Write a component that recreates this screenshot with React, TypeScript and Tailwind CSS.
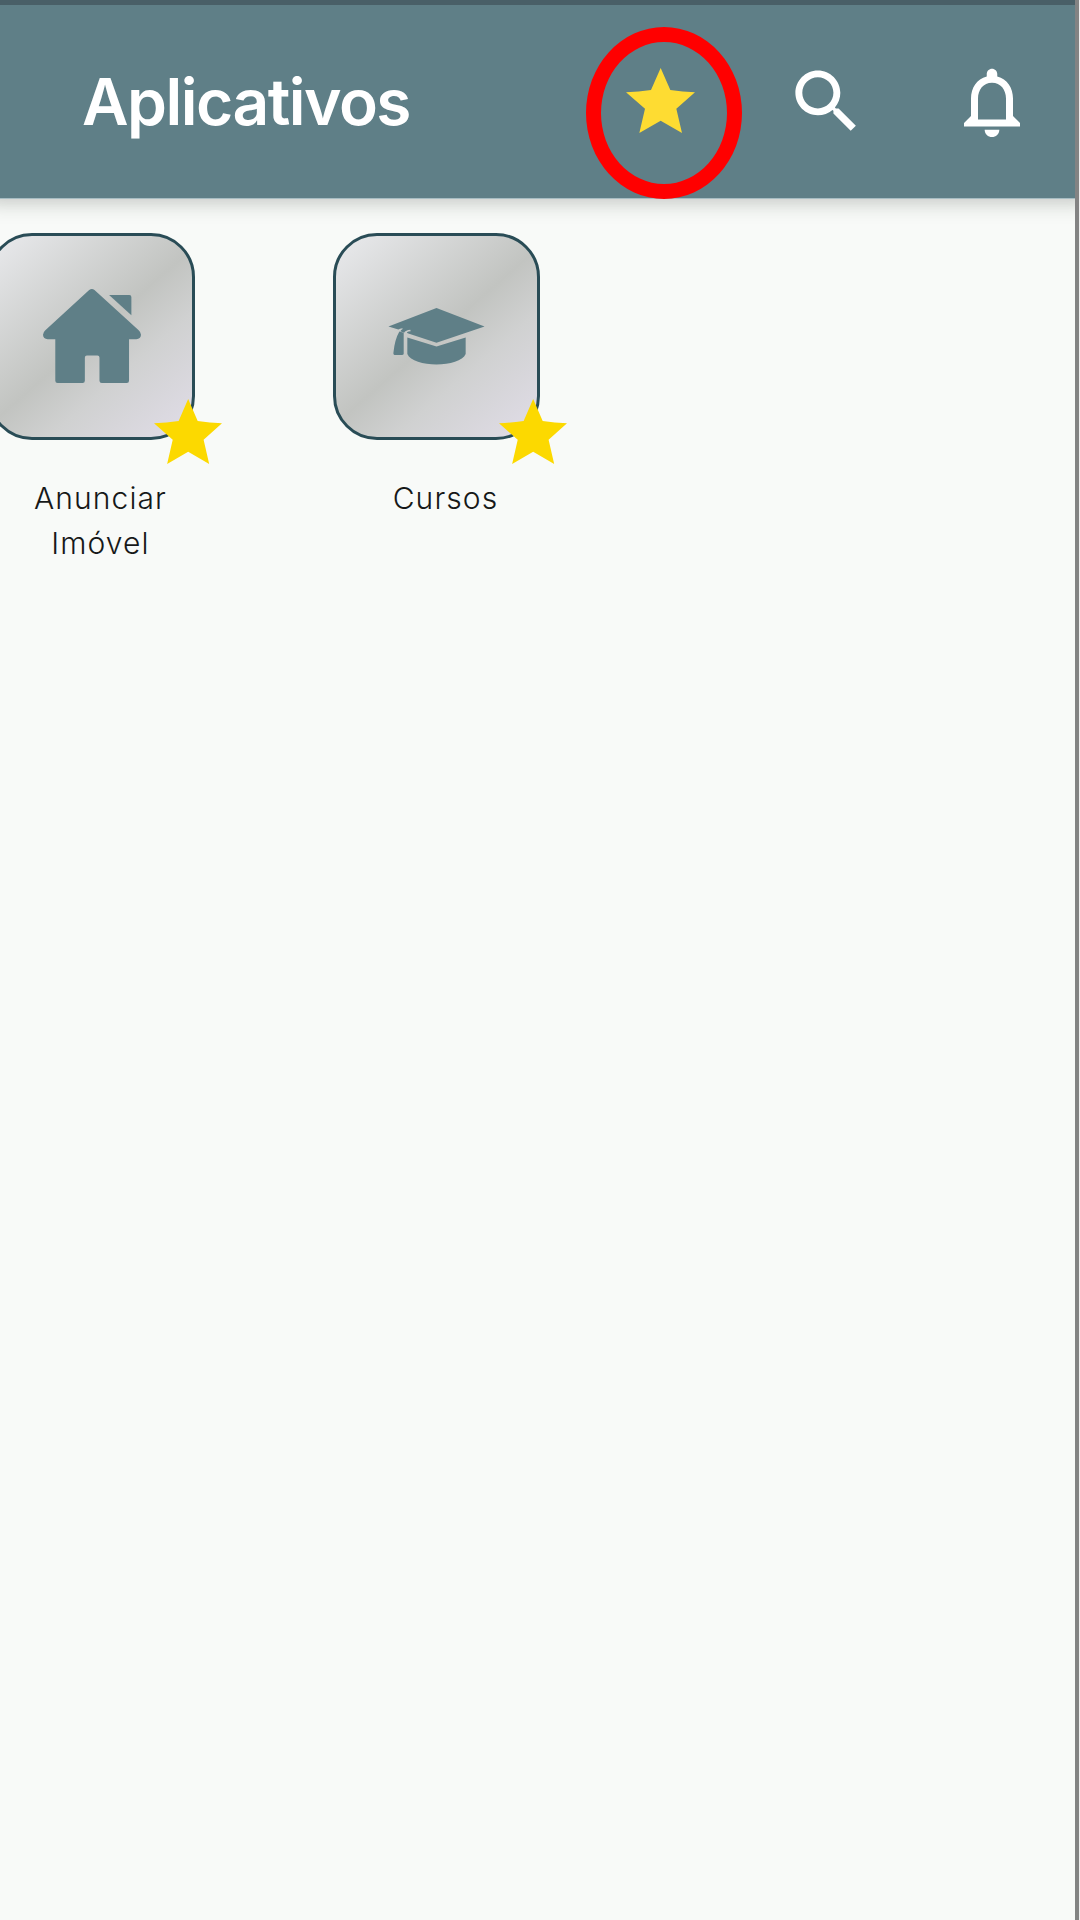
import type { ReactNode } from "react";

function Star({ className }: { className: string }) {
  return (
    <svg viewBox="0 0 207 195" preserveAspectRatio="none" className={className} fill="currentColor" aria-hidden="true">
      <path d="M104 0 133 66Q170 71 207 73L151 122 168 195 104 158 40 195 57 122 0 73Q38 71 75 66Z" />
    </svg>
  );
}

function SearchIcon() {
  return (
    <svg viewBox="0 0 24 24" className="size-[83px]" fill="currentColor" aria-hidden="true">
      <path d="M15.5 14h-.79l-.28-.27C15.41 12.59 16 11.11 16 9.5 16 5.91 13.09 3 9.5 3S3 5.91 3 9.5 5.91 16 9.5 16c1.61 0 3.09-.59 4.23-1.57l.27.28v.79l5 4.99L20.49 19l-4.99-5zm-6 0C7.01 14 5 11.99 5 9.5S7.01 5 9.5 5 14 7.01 14 9.5 11.99 14 9.5 14z" />
    </svg>
  );
}

function BellIcon() {
  return (
    <svg viewBox="0 0 24 24" className="size-[84px]" fill="currentColor" aria-hidden="true">
      <path d="M12 22c1.1 0 2.1-.9 2.1-2.1H9.9c0 1.2 1 2.1 2.1 2.1zm6-6v-5c0-3.07-1.63-5.64-4.5-6.32V4c0-.83-.67-1.5-1.5-1.5s-1.5.67-1.5 1.5v.68C7.64 5.36 6 7.92 6 11v5l-2 2v1h16v-1l-2-2zm-2 1H8v-6c0-2.48 1.51-4.5 4-4.5s4 2.02 4 4.5v6z" />
    </svg>
  );
}

function HouseIcon() {
  return (
    <svg viewBox="0 0 295 283" className="ml-[2px] -mt-[1px] h-[94px] w-[98px]" fill="currentColor" aria-hidden="true">
      <path d="M139 3Q147-3 155 3L288 124Q295 130 295 138 294 151 281 151H259V276Q259 283 252 283H177Q170 283 170 276V206Q170 200 164 200H132Q126 200 126 206V276Q126 283 119 283H44Q37 283 37 276V151H14Q1 151 0 138 0 130 7 124Z" />
      <path d="M199 18H260Q266 18 266 24V79Z" />
    </svg>
  );
}

function GraduationIcon() {
  return (
    <svg viewBox="0 0 290 172" className="h-[57px] w-[97px]" fill="currentColor" aria-hidden="true">
      <path d="M145 0 290 56 145 105 60 77Q55 75 56 73 60 70 67 70L66 66Q52 67 47 75L36 70Q38 65 43 63L42 61Q34 62 30 65L0 56Z" />
      <path d="M46 75V138Q46 142 40 142H21Q14 142 15 135 19 95 33 71Z" />
      <path d="M57 89 145 116 233 89V139C216 181 74 181 57 139Z" />
    </svg>
  );
}

function AppTile({ icon, children }: { icon: ReactNode; children: ReactNode }) {
  return (
    <article className="flex w-[220px] flex-col items-center">
      <div className="relative flex size-[207px] items-center justify-center rounded-[44px] border-[3px] border-[#294c56] bg-[linear-gradient(139deg,#e5e6e8_6%,#c2c4c1_50%,#d0d1d1_67%,#dedbe4_94%)] text-[#5f7f87]">
        {icon}
        <Star className="absolute -right-[30px] -bottom-[27px] h-[65px] w-[68px] text-[#fcd900]" />
      </div>
      <h2 className="mt-[36px] ml-[19px] text-center text-[30px] leading-[44.5px] font-light tracking-[1.1px] text-[#161818]">{children}</h2>
    </article>
  );
}

export default function App() {
  return (
    <div className="flex h-[1920px] w-[1080px] overflow-hidden bg-[#f8faf8] font-['Inter',sans-serif]">
      <div className="flex min-w-0 flex-1 flex-col">
        <header className="flex h-[199px] shrink-0 items-start border-t-[5px] border-b border-t-[#495f67] border-b-[#a7bdc3] bg-[#5f7f87] text-white shadow-[0_-10px_18px_14px_rgba(40,50,40,0.25)]">
          <h1 className="mt-[57px] ml-[82px] w-[504px] text-[64px] leading-[80px] font-semibold tracking-[-1.5px] whitespace-nowrap">Aplicativos</h1>
          <button className="mt-[22px] flex h-[172px] w-[156px] shrink-0 items-start justify-center rounded-[50%] border-[15.5px] border-[#ff0000]" aria-label="Favoritos">
            <Star className="mt-[26px] mr-[7px] h-[65px] w-[69px] text-[#fedc32]" />
          </button>
          <button className="mt-[55px] ml-[43px] shrink-0" aria-label="Pesquisar"><SearchIcon /></button>
          <button className="mt-[55px] ml-[82px] shrink-0" aria-label="Notificações"><BellIcon /></button>
        </header>
        <main className="-ml-[19px] flex gap-[125px] pt-[34px]">
          <AppTile icon={<HouseIcon />}>Anunciar<br />Imóvel</AppTile>
          <AppTile icon={<GraduationIcon />}>Cursos</AppTile>
        </main>
      </div>
      <div className="relative w-[5px] shrink-0 border-r border-r-[#eeeeee] bg-[#838383]" />
    </div>
  );
}
